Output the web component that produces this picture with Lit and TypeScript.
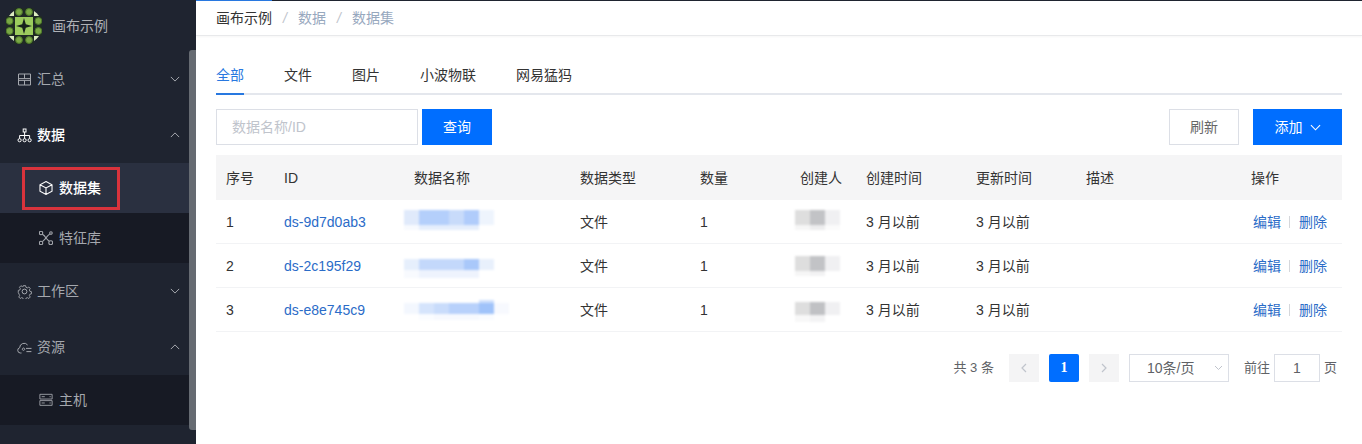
import { LitElement, html, css, svg } from "lit";
import { customElement } from "lit/decorators.js";

const icons: Record<string, unknown> = {
  grid: svg`<path d="M1.5 2h12v11h-12zM1.5 6.6h12M1.5 8.4h12M7.5 2v4.6M7.5 8.4V13"/>`,
  org: svg`<rect x="6.2" y="1" width="2.8" height="3"/><circle cx="2.6" cy="12.2" r="1.6"/><circle cx="7.6" cy="12.2" r="1.6"/><circle cx="12.6" cy="12.2" r="1.6"/><path d="M7.6 4v6.5M2.6 10.5V7.5h10v3"/>`,
  cube: svg`<path d="M7 1l5.6 3v6L7 13 1.4 10V4zM1.4 4L7 7l5.6-3M7 7v6"/>`,
  nodes: svg`<circle cx="2.4" cy="2.4" r="1.6"/><circle cx="11.6" cy="2.4" r="1.2"/><circle cx="2.4" cy="11.6" r="1.6"/><circle cx="11.4" cy="11.4" r="1.8"/><path d="M3.6 3.6C6 5 6.4 6 7 7c.6-1.2 2-2.6 3.6-3.8M3.6 10.4C5 9.4 6 8 7 7c.8 1 1.6 2 3 3"/>`,
  chip: svg`<circle cx="7.5" cy="7.5" r="2.4"/><path d="M6.3 1h2.4l.4 1.8 1.6.7 1.6-1 1.6 1.7-1 1.5.6 1.6 1.7.4v2.4l-1.7.4-.6 1.6 1 1.5-1.6 1.7-1.6-1-1.6.7-.4 1.7H6.3l-.4-1.7-1.6-.7-1.6 1-1.6-1.7 1-1.5-.6-1.6L.6 8.7V6.3l1.7-.4.6-1.6-1-1.5 1.6-1.7 1.6 1 1.6-.7z" transform="translate(.75 .75) scale(.9)"/>`,
  cloud: svg`<path d="M4.5 13H3.4a2.7 2.7 0 0 1-.7-5.3A4.4 4.4 0 0 1 10.6 5M9 8.4h5.5M9.4 11.6h5M7.4 10a1.2 1.2 0 1 0-.1.1"/>`,
  server: svg`<path d="M1 1.5h14v5.4H1zM1 8.7h14v5.4H1zM3 4.2h3.6M3 11.4h3.6M12 4.2h1.4M12 11.4h1.4"/>`,
};

const chevron = (up: boolean) =>
  html`<svg class="chev" viewBox="0 0 12 7"><path d=${up ? "M1 6l5-5 5 5" : "M1 1l5 5 5-5"} /></svg>`;

@customElement("side-menu")
class SideMenu extends LitElement {
  static styles = css`
    :host {
      display: block;
      width: 196px;
      height: 444px;
      background: #1f2430;
      position: relative;
      overflow: hidden;
      flex: none;
      font-family: "Liberation Sans", "Noto Sans CJK SC", sans-serif;
      line-height: 20px;
    }
    .brand {
      height: 51px;
      display: flex;
      align-items: center;
      padding-left: 6px;
      gap: 10px;
      color: #aeb1b6;
      font-size: 14px;
    }
    .item {
      height: 56px;
      display: flex;
      align-items: center;
      padding-left: 17px;
      padding-right: 16px;
      color: #a5a8ae;
      font-size: 14px;
      gap: 5px;
    }
    .item.open {
      color: #fff;
      font-weight: 500;
    }
    .item span {
      flex: 1;
    }
    .sub {
      height: 50px;
      display: flex;
      align-items: center;
      padding-left: 39px;
      gap: 6px;
      background: #171a24;
      color: #a5a8ae;
      font-size: 14px;
    }
    .sub.active {
      background: #2a3040;
      color: #fff;
      font-weight: 500;
    }
    .ico {
      width: 15px;
      height: 15px;
      fill: none;
      stroke: currentColor;
      stroke-width: 1;
      flex: none;
    }
    .sub .ico {
      width: 14px;
      height: 14px;
    }
    .chev {
      width: 10px;
      height: 6px;
      fill: none;
      stroke: #a5a8ae;
      stroke-width: 1.2;
    }
    .thumb {
      position: absolute;
      left: 189px;
      top: 50px;
      width: 7px;
      height: 380px;
      background: #666b72;
      border-radius: 3px 0 0 3px;
    }
    .mark {
      position: absolute;
      left: 22px;
      top: 167px;
      width: 98px;
      height: 43px;
      box-sizing: border-box;
      border: 3px solid #d9333c;
    }
  `;

  private _item(label: string, icon: string, open = false, up = open) {
    return html`<div class="item ${open ? "open" : ""}">
      <svg class="ico" viewBox="0 0 15 15">${icons[icon]}</svg>
      <span>${label}</span>
      ${chevron(up)}
    </div>`;
  }

  private _sub(label: string, icon: string, active = false) {
    return html`<div class="sub ${active ? "active" : ""}">
      <svg class="ico" viewBox=${icon == "server" ? "0 0 16 16" : "0.5 0.5 13 13"}>${icons[icon]}</svg>${label}
    </div>`;
  }

  render() {
    return html`
      <div class="brand">
        <svg width="36" height="36" viewBox="0 0 36 36">
          <circle cx="18" cy="18" r="18" fill="#dcecc0" />
          <rect x="8" y="0" width="20" height="36" fill="#1f2a24" />
          <rect x="0" y="8" width="36" height="20" fill="#1f2a24" />
          <rect x="9" y="9" width="18" height="18" fill="#9ccc5e" />
          ${[13, 23].map(
            (p) => svg`
              <circle cx=${p} cy="4" r="3.4" fill="#7aa845" stroke="#4e7a2a" />
              <circle cx=${p} cy="32" r="3.4" fill="#7aa845" stroke="#4e7a2a" />
              <circle cx="3.6" cy=${p} r="3.4" fill="#7aa845" stroke="#4e7a2a" />
              <circle cx="32.4" cy=${p} r="3.4" fill="#7aa845" stroke="#4e7a2a" />`
          )}
          <path d="M18 10l1.8 6.2L26 18l-6.2 1.8L18 26l-1.8-6.2L10 18l6.2-1.8z" fill="#16211c" />
        </svg>
        画布示例
      </div>
      ${this._item("汇总", "grid")}
      ${this._item("数据", "org", true)}
      ${this._sub("数据集", "cube", true)}
      ${this._sub("特征库", "nodes")}
      ${this._item("工作区", "chip")}
      ${this._item("资源", "cloud", false, true)}
      ${this._sub("主机", "server")}
      <div class="thumb"></div>
      <div class="mark"></div>
    `;
  }
}

interface Strip {
  h: number;
  cells: string[];
}

// blurred cells, colours read off the screenshot, 15px wide
const rows: { id: string; nameTop: number; name: Strip[]; userTop: number; user: Strip[] }[] = [
  {
    id: "ds-9d7d0ab3",
    nameTop: 10,
    name: [
      { h: 15, cells: ["#e0eafb", "#b4cffb", "#b4cffb", "#c8dbfa", "#b0ccfb", "#eef4fd"] },
      { h: 5, cells: ["#f8fafe", "#e5eefc", "#e5eefc", "#e5eefc", "#e5eefc", "#ffffff"] },
    ],
    userTop: 10,
    user: [
      { h: 15, cells: ["#dedede", "#c2c3c6", "#f0f0f2"] },
      { h: 5, cells: ["#f6f6f6", "#ededee", "#fbfbfb"] },
    ],
  },
  {
    id: "ds-2c195f29",
    nameTop: 15,
    name: [
      { h: 11, cells: ["#e6effc", "#c3d8fb", "#c3d8fb", "#c3d8fb", "#a9c8fa", "#e8f0fc"] },
      { h: 8, cells: ["#f8fafe", "#eef3fd", "#eef3fd", "#eef3fd", "#eef3fd", "#ffffff"] },
    ],
    userTop: 12,
    user: [
      { h: 15, cells: ["#dedede", "#c2c3c6", "#f0f0f2"] },
      { h: 5, cells: ["#f6f6f6", "#f2f2f3", "#ffffff"] },
    ],
  },
  {
    id: "ds-e8e745c9",
    nameTop: 12,
    name: [
      { h: 3, cells: ["#ffffff", "#ffffff", "#ffffff", "#ffffff", "#ffffff", "#cfe0fc", "#ffffff"] },
      { h: 11, cells: ["#f3f7fe", "#d5e4fc", "#c9dcfb", "#b8d1fb", "#b8d1fb", "#a0c3fa", "#f7f9fe"] },
      { h: 6, cells: ["#ffffff", "#fafcff", "#f7f9fe", "#f7f9fe", "#f7f9fe", "#fafcff", "#ffffff"] },
    ],
    userTop: 14,
    user: [
      { h: 13, cells: ["#dedede", "#c0c1c4", "#f0f0f2"] },
      { h: 7, cells: ["#f8f8f8", "#f3f3f4", "#ffffff"] },
    ],
  },
];

@customElement("app-root")
export class AppRoot extends LitElement {
  static styles = css`
    :host {
      display: flex;
      width: 1362px;
      height: 444px;
      overflow: hidden;
      background: #fff;
      font-family: "Liberation Sans", "Noto Sans CJK SC", sans-serif;
      font-size: 14px;
      line-height: 20px;
      color: #333;
    }
    main {
      flex: 1;
      min-width: 0;
      position: relative;
    }
    .topline {
      position: absolute;
      top: 0;
      left: 0;
      right: 0;
      height: 1px;
      background: #1f2430;
    }
    .topline div {
      width: 76px;
      height: 100%;
      background: #2878e0;
    }
    .crumbs {
      height: 36px;
      box-sizing: border-box;
      border-bottom: 1px solid #e8e9eb;
      box-shadow: 0 1px 2px rgba(0, 0, 0, 0.04);
      display: flex;
      align-items: center;
      padding-left: 20px;
      padding-top: 1px;
      color: #97a8be;
    }
    .crumbs b {
      font-weight: 400;
      color: #333;
    }
    .crumbs i {
      width: 26px;
      text-align: center;
      color: #c0c4cc;
    }
    .content {
      padding: 0 20px;
    }
    .tabs {
      display: flex;
      gap: 40px;
      height: 59px;
      box-sizing: border-box;
      border-bottom: 2px solid #e4e7ed;
      align-items: flex-end;
    }
    .tab {
      height: 30px;
      margin-bottom: -2px;
      box-sizing: border-box;
      color: #333;
    }
    .tab.on {
      color: #2878e0;
      border-bottom: 2px solid #2878e0;
    }
    .bar {
      display: flex;
      margin-top: 14px;
      height: 36px;
    }
    .search {
      width: 202px;
      box-sizing: border-box;
      border: 1px solid #dcdfe6;
      padding-left: 15px;
      line-height: 34px;
      color: #c0c4cc;
    }
    .btn {
      display: flex;
      align-items: center;
      justify-content: center;
      gap: 7px;
      box-sizing: border-box;
      width: 70px;
      background: #006eff;
      color: #fff;
    }
    .btn.query {
      margin-left: 4px;
    }
    .btn.plain {
      margin-left: auto;
      background: #fff;
      border: 1px solid #dcdfe6;
      color: #666;
    }
    .btn.add {
      width: 89px;
      margin-left: 14px;
    }
    .btn svg {
      width: 11px;
      height: 7px;
      fill: none;
      stroke: #fff;
      stroke-width: 1.2;
    }
    .table {
      margin-top: 10px;
    }
    .row {
      display: grid;
      grid-template-columns: 58px 130px 166px 120px 100px 66px 110px 110px 165px 1fr;
      height: 44px;
      align-items: center;
      border-bottom: 1px solid #f2f3f5;
      box-sizing: border-box;
    }
    .row > * {
      padding-left: 10px;
    }
    .row.head {
      height: 45px;
      background: #f5f5f6;
      border-bottom: 0;
    }
    .row a {
      color: #2b6cc8;
      text-decoration: none;
    }
    .row .ops {
      display: flex;
      align-items: center;
      padding-left: 12px;
    }
    .ops i {
      width: 1px;
      height: 12px;
      margin: 0 9px 0 8px;
      background: #d5d7db;
    }
    .row .mosaic {
      padding-left: 0;
      align-self: start;
      filter: blur(1px);
    }
    .row .mosaic.user {
      padding-left: 5px;
    }
    .mosaic div {
      display: flex;
    }
    .mosaic span {
      width: 15px;
    }
    .pager {
      display: flex;
      align-items: center;
      justify-content: flex-end;
      height: 28px;
      margin-top: 22px;
      padding-right: 5px;
      font-size: 13px;
      color: #606266;
    }
    .pg {
      width: 30px;
      height: 28px;
      display: flex;
      align-items: center;
      justify-content: center;
      background: #f4f4f5;
      margin-left: 10px;
    }
    .pg.first {
      margin-left: 15px;
    }
    .pg svg {
      width: 6px;
      height: 10px;
      fill: none;
      stroke: #c0c4cc;
      stroke-width: 1.2;
    }
    .pg.cur {
      background: #006eff;
      color: #fff;
      font-weight: 700;
      border-radius: 2px;
      font-family: "Liberation Serif", serif;
      font-size: 14px;
    }
    .size {
      width: 100px;
      height: 28px;
      box-sizing: border-box;
      border: 1px solid #dcdfe6;
      margin-left: 10px;
      display: flex;
      align-items: center;
      padding: 0 5px 0 17px;
      justify-content: space-between;
      font-size: 14px;
    }
    .size svg {
      width: 9px;
      height: 6px;
      fill: none;
      stroke: #c0c4cc;
    }
    .goto {
      margin-left: 15px;
    }
    .num {
      width: 46px;
      height: 28px;
      box-sizing: border-box;
      border: 1px solid #dcdfe6;
      margin: 0 4px;
      text-align: center;
      line-height: 26px;
      font-size: 14px;
    }
  `;

  private _mosaic(strips: Strip[], top: number, user = false) {
    return html`<div class="mosaic ${user ? "user" : ""}" style="margin-top:${top}px">
      ${strips.map(
        (s) => html`<div style="height:${s.h}px">${s.cells.map((c) => html`<span style="background:${c}"></span>`)}</div>`
      )}
    </div>`;
  }

  render() {
    return html`
      <side-menu></side-menu>
      <main>
        <div class="topline"><div></div></div>
        <div class="crumbs">
          <b>画布示例</b><i>/</i><span>数据</span><i>/</i><span>数据集</span>
        </div>
        <div class="content">
          <div class="tabs">
            <div class="tab on">全部</div>
            <div class="tab">文件</div>
            <div class="tab">图片</div>
            <div class="tab">小波物联</div>
            <div class="tab">网易猛犸</div>
          </div>
          <div class="bar">
            <div class="search">数据名称/ID</div>
            <div class="btn query">查询</div>
            <div class="btn plain">刷新</div>
            <div class="btn add">
              添加
              <svg viewBox="0 0 12 7"><path d="M1 1l5 5 5-5" /></svg>
            </div>
          </div>
          <div class="table">
            <div class="row head">
              <div>序号</div><div>ID</div><div>数据名称</div><div>数据类型</div><div>数量</div>
              <div>创建人</div><div>创建时间</div><div>更新时间</div><div>描述</div><div>操作</div>
            </div>
            ${rows.map(
              (r, i) => html`<div class="row">
                <div>${i + 1}</div>
                <div><a>${r.id}</a></div>
                ${this._mosaic(r.name, r.nameTop)}
                <div>文件</div>
                <div>1</div>
                ${this._mosaic(r.user, r.userTop, true)}
                <div>3 月以前</div>
                <div>3 月以前</div>
                <div></div>
                <div class="ops"><a>编辑</a><i></i><a>删除</a></div>
              </div>`
            )}
          </div>
          <div class="pager">
            <span>共 3 条</span>
            <div class="pg first"><svg viewBox="0 0 6 10"><path d="M5 1L1 5l4 4" /></svg></div>
            <div class="pg cur">1</div>
            <div class="pg"><svg viewBox="0 0 6 10"><path d="M1 1l4 4-4 4" /></svg></div>
            <div class="size">
              10条/页
              <svg viewBox="0 0 9 6"><path d="M1 1l3.5 3.5L8 1" /></svg>
            </div>
            <span class="goto">前往</span>
            <div class="num">1</div>
            <span>页</span>
          </div>
        </div>
      </main>
    `;
  }
}
